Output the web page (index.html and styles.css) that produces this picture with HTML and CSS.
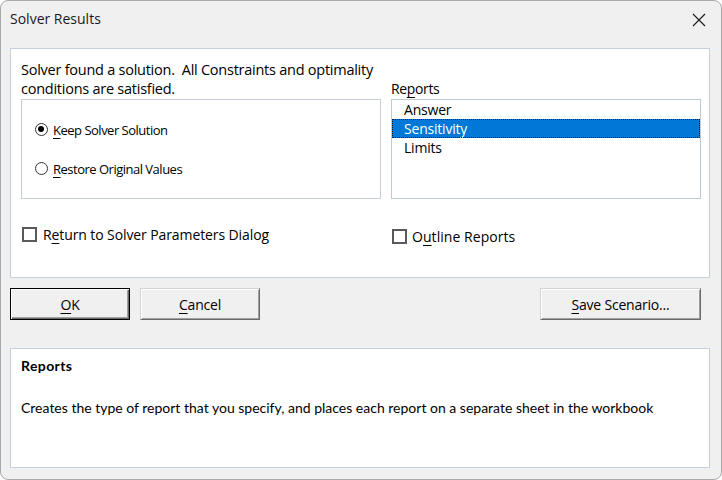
FILE: index.html
```html
<!DOCTYPE html>
<html>
<head>
<meta charset="utf-8">
<link rel="stylesheet" href="styles.css">
</head>
<body>
<div class="window">
  <div class="titlebar">
    <span class="title">Solver Results</span>
    <svg class="close" width="14" height="14" viewBox="0 0 14 14"><path d="M1 1 L13 13 M13 1 L1 13" stroke="#1a1a1a" stroke-width="1.1" fill="none"/></svg>
  </div>
  <div class="content">
    <div class="panel top-panel">
      <div class="message">Solver found a solution.&nbsp; All Constraints and optimality conditions are satisfied.</div>
      <div class="reports-label">Re<u>p</u>orts</div>
      <div class="groupbox">
        <div class="radio-row"><span class="radio checked"></span><span class="radio-text"><u>K</u>eep Solver Solution</span></div>
        <div class="radio-row"><span class="radio"></span><span class="radio-text"><u>R</u>estore Original Values</span></div>
      </div>
      <div class="listbox">
        <div class="item">Answer</div>
        <div class="item selected">Sensitivity</div>
        <div class="item">Limits</div>
      </div>
      <div class="check-row left-check"><span class="checkbox"></span><span>R<u>e</u>turn to Solver Parameters Dialog</span></div>
      <div class="check-row right-check"><span class="checkbox"></span><span>O<u>u</u>tline Reports</span></div>
    </div>
    <div class="buttons">
      <div class="btn default"><span><u>O</u>K</span></div>
      <div class="btn cancel"><span><u>C</u>ancel</span></div>
      <div class="btn save"><span><u>S</u>ave Scenario...</span></div>
    </div>
    <div class="panel bottom-panel">
      <div class="help-title">Reports</div>
      <div class="help-text">Creates the type of report that you specify, and places each report on a separate sheet in the workbook</div>
    </div>
  </div>
</div>
</body>
</html>
```

FILE: styles.css
```css
* { box-sizing: border-box; }
html, body { margin: 0; padding: 0; background: #ffffff; }
body { width: 722px; height: 480px; overflow: hidden; }

.window {
  width: 722px;
  height: 480px;
  background: #f0f0f0;
  border: 1px solid #a9a9a9;
  border-radius: 8px;
  overflow: hidden;
  font-family: "Open Sans", "Noto Sans", sans-serif;
  color: #000;
}

.titlebar {
  height: 47px;
  display: flex;
  align-items: flex-start;
  justify-content: space-between;
  padding: 8px 15px 0 9px;
}
.title {
  font-size: 14px;
  line-height: 20px;
  letter-spacing: 0;
  color: #1a1a1a;
}
.close { margin-top: 4px; }

.content {
  padding: 0 11px 0 9px;
}

.panel {
  background: #fff;
  border: 1px solid #c5d1dd;
}

.top-panel {
  height: 230px;
  display: grid;
  grid-template-columns: 360px 310px;
  grid-template-rows: 38px 100px auto;
  column-gap: 10px;
  row-gap: 1px;
  padding: 11px 8px 0 10px;
  font-size: 14px;
  letter-spacing: -0.35px;
}

.message {
  line-height: 19px;
  font-size: 14.5px;
  letter-spacing: -0.25px;
}
.reports-label {
  align-self: end;
  line-height: 19px;
  margin-bottom: 0;
  font-size: 14px;
}

u { text-decoration: underline; text-underline-offset: 3px; text-decoration-thickness: 1px; }

.groupbox {
  border: 1px solid #c8ced6;
  padding: 20px 0 0 13px;
  display: flex;
  flex-direction: column;
  gap: 20px;
}
.radio-row {
  display: flex;
  align-items: center;
  height: 19px;
  font-size: 13px;
  letter-spacing: -0.5px;
}
.radio {
  width: 13px;
  height: 13px;
  border-radius: 50%;
  border: 1.5px solid #333;
  margin-right: 5px;
  position: relative;
  flex: none;
}
.radio.checked::after {
  content: "";
  position: absolute;
  left: 2px;
  top: 2px;
  width: 6px;
  height: 6px;
  border-radius: 50%;
  background: #000;
}

.listbox {
  border: 1px solid #c0c8d2;
  font-size: 14px;
  letter-spacing: -0.2px;
}
.item {
  height: 19px;
  line-height: 19px;
  padding-left: 12px;
}
.item.selected {
  background: #0078d7;
  color: #fff;
  outline: 1px dotted #1a1a1a;
  outline-offset: -1px;
}

.check-row {
  display: flex;
  align-items: center;
  height: 19px;
  line-height: 19px;
  font-size: 14px;
  letter-spacing: -0.1px;
}
.left-check { margin-top: 25px; margin-left: 1px; }
.right-check { margin-top: 27px; margin-left: 1px; letter-spacing: 0.05px; }
.checkbox {
  width: 15px;
  height: 15px;
  border: 2px solid #5a5a5a;
  margin-right: 6px;
  flex: none;
}
.right-check .checkbox { margin-right: 5px; }

.buttons {
  display: flex;
  margin-top: 10px;
  padding-right: 9px;
  gap: 10px;
}
.btn {
  height: 32px;
  display: flex;
  align-items: center;
  justify-content: center;
  font-size: 14px;
  letter-spacing: -0.2px;
  background: #f0f0f0;
  border: 1px solid #d4d4d4;
  border-right-color: #6a6a6a;
  border-bottom-color: #6a6a6a;
  box-shadow: inset 1px 1px 0 #ffffff, inset -1px -1px 0 #a0a0a0;
}
.btn.default {
  width: 120px;
  border: 1px solid #000;
  box-shadow: inset 1px 1px 0 #ffffff, inset -1px -1px 0 #6a6a6a, inset -2px -2px 0 #a0a0a0;
}
.btn.cancel { width: 120px; }
.btn.save { width: 161px; margin-left: auto; }

.bottom-panel {
  margin-top: 28px;
  height: 120px;
  padding: 7px 10px 0 10px;
  font-family: "Lato", "Open Sans", sans-serif;
  font-size: 14px;
}
.help-title {
  font-weight: bold;
  line-height: 19px;
  letter-spacing: 0.4px;
}
.help-text {
  margin-top: 23px;
  line-height: 19px;
}
```
